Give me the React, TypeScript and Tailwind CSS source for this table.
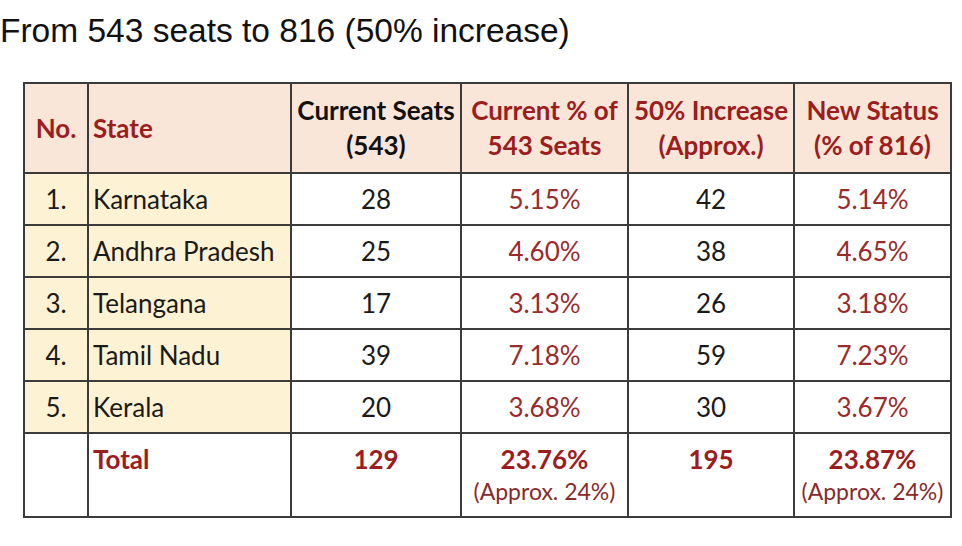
import React from 'react';

const rows = [
  { no: '1.', state: 'Karnataka', seats: '28', pct: '5.15%', inc: '42', next: '5.14%' },
  { no: '2.', state: 'Andhra Pradesh', seats: '25', pct: '4.60%', inc: '38', next: '4.65%' },
  { no: '3.', state: 'Telangana', seats: '17', pct: '3.13%', inc: '26', next: '3.18%' },
  { no: '4.', state: 'Tamil Nadu', seats: '39', pct: '7.18%', inc: '59', next: '7.23%' },
  { no: '5.', state: 'Kerala', seats: '20', pct: '3.68%', inc: '30', next: '3.67%' },
];

const cell = 'border-2 border-[#3b3b3b]';

export default function App() {
  return (
    <div className="w-[962px] h-[546px] bg-white overflow-hidden">
      <h1 className="pt-[11px] text-[33.5px] leading-[40px] text-[#111] font-['Liberation_Sans',Arial,sans-serif]">
        From 543 seats to 816 (50% increase)
      </h1>

      <table className="mt-[31px] ml-[23px] border-collapse table-fixed font-['Lato',sans-serif] text-[26px] text-[#1a1a1a]">
        <colgroup>
          <col className="w-[64px]" />
          <col className="w-[203px]" />
          <col className="w-[170px]" />
          <col className="w-[167px]" />
          <col className="w-[166px]" />
          <col className="w-[157px]" />
        </colgroup>
        <thead>
          <tr className="h-[90px] bg-[#fae6d9] font-bold leading-[35px]">
            <th className={`${cell} text-[#9c1d1d] text-center`}>No.</th>
            <th className={`${cell} text-[#9c1d1d] text-left pl-[4px]`}>State</th>
            <th className={`${cell} text-[#111] text-center`}>Current Seats<br />(543)</th>
            <th className={`${cell} text-[#9c1d1d] text-center`}>Current % of<br />543 Seats</th>
            <th className={`${cell} text-[#9c1d1d] text-center`}>50% Increase<br />(Approx.)</th>
            <th className={`${cell} text-[#9c1d1d] text-center`}>New Status<br />(% of 816)</th>
          </tr>
        </thead>
        <tbody>
          {rows.map((r) => (
            <tr key={r.no} className="h-[52px]">
              <td className={`${cell} bg-[#fdf2d3] text-center`}>{r.no}</td>
              <td className={`${cell} bg-[#fdf2d3] pl-[4px]`}>{r.state}</td>
              <td className={`${cell} text-center`}>{r.seats}</td>
              <td className={`${cell} text-center text-[#9a2b2b]`}>{r.pct}</td>
              <td className={`${cell} text-center`}>{r.inc}</td>
              <td className={`${cell} text-center text-[#9a2b2b]`}>{r.next}</td>
            </tr>
          ))}
          <tr className="h-[84px] align-top">
            <td className={cell}></td>
            <td className={`${cell} pl-[4px] pt-[10px] leading-[30px] font-bold text-[#9c1d1d]`}>Total</td>
            <td className={`${cell} pt-[10px] leading-[30px] text-center font-bold text-[#9c1d1d]`}>129</td>
            <td className={`${cell} pt-[10px] text-center text-[#9c1d1d]`}>
              <div className="font-bold leading-[30px]">23.76%</div>
              <div className="text-[23px] leading-[34px] text-[#8a2a2a]">(Approx. 24%)</div>
            </td>
            <td className={`${cell} pt-[10px] leading-[30px] text-center font-bold text-[#9c1d1d]`}>195</td>
            <td className={`${cell} pt-[10px] text-center text-[#9c1d1d]`}>
              <div className="font-bold leading-[30px]">23.87%</div>
              <div className="text-[23px] leading-[34px] text-[#8a2a2a]">(Approx. 24%)</div>
            </td>
          </tr>
        </tbody>
      </table>
    </div>
  );
}
